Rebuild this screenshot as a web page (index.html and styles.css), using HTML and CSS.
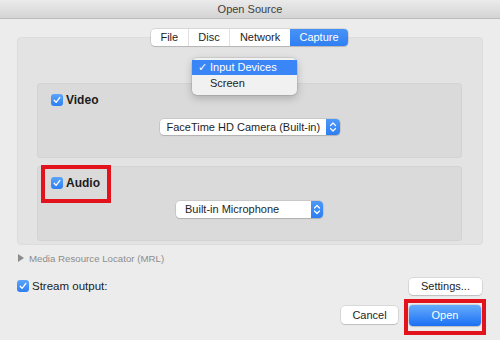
FILE: index.html
```html
<!DOCTYPE html>
<html lang="en">

<head>
  <meta charset="UTF-8">
  <meta name="viewport" content="width=device-width, initial-scale=1.0">
  <title>Open Source</title>
  <link rel="stylesheet" href="styles.css">
</head>

<body>
  <div class="window">
    <div class="titlebar">Open Source</div>
    <div class="content">
      <div class="tabpanel">
        <div class="tabs">
          <span class="tab">File</span>
          <span class="tab">Disc</span>
          <span class="tab">Network</span>
          <span class="tab tab-active">Capture</span>
        </div>

        <!-- capture mode menu, opened -->
        <div class="menu">
          <div class="menu-item menu-item-on"><span class="menu-check">✓</span>Input Devices</div>
          <div class="menu-item">Screen</div>
        </div>

        <div class="group">
          <label class="check-label">
            <span class="checkbox"><svg width="12" height="12" viewBox="0 0 12 12"><path d="M3.2 6.3 L5.1 8.4 L8.9 3.4" fill="none" stroke="#fff" stroke-width="1.3" stroke-linecap="round" stroke-linejoin="round"/></svg></span>
            Video
          </label>
          <div class="popup popup-camera">
            <span class="popup-text">FaceTime HD Camera (Built-in)</span>
            <span class="stepper"><svg width="14" height="16" viewBox="0 0 14 16"><path d="M4.5 6.5 L7 4 L9.5 6.5 M4.5 9.5 L7 12 L9.5 9.5" fill="none" stroke="#fff" stroke-width="1.2" stroke-linecap="round" stroke-linejoin="round"/></svg></span>
          </div>
        </div>

        <div class="group">
          <label class="check-label">
            <span class="checkbox"><svg width="12" height="12" viewBox="0 0 12 12"><path d="M3.2 6.3 L5.1 8.4 L8.9 3.4" fill="none" stroke="#fff" stroke-width="1.3" stroke-linecap="round" stroke-linejoin="round"/></svg></span>
            Audio
          </label>
          <span class="mark mark-audio"></span>
          <div class="popup popup-mic">
            <span class="popup-text">Built-in Microphone</span>
            <span class="stepper"><svg width="12" height="17" viewBox="0 0 12 17"><path d="M3.5 7 L6 4.5 L8.5 7 M3.5 10 L6 12.5 L8.5 10" fill="none" stroke="#fff" stroke-width="1.2" stroke-linecap="round" stroke-linejoin="round"/></svg></span>
          </div>
        </div>
      </div>

      <div class="disclosure"><span class="triangle"></span>Media Resource Locator (MRL)</div>

      <div class="stream-row">
        <label class="stream-label">
          <span class="checkbox"><svg width="12" height="12" viewBox="0 0 12 12"><path d="M3.2 6.3 L5.1 8.4 L8.9 3.4" fill="none" stroke="#fff" stroke-width="1.3" stroke-linecap="round" stroke-linejoin="round"/></svg></span>
          Stream output:
        </label>
        <button class="btn btn-settings">Settings...</button>
      </div>

      <div class="actions">
        <button class="btn btn-cancel">Cancel</button>
        <button class="btn btn-open">Open</button>
      </div>
    </div>
  </div>
</body>

</html>
```

FILE: styles.css
```css
* {
  margin: 0;
  padding: 0;
  box-sizing: border-box;
}

body {
  background: #ececec;
  font-family: "Liberation Sans", Arial, sans-serif;
  font-size: 11px;
  color: #222;
}

.window {
  width: 500px;
  height: 340px;
  display: flex;
  flex-direction: column;
  background: #ececec;
  overflow: hidden;
}

/* 标题栏 */
.titlebar {
  height: 19px;
  line-height: 18px;
  text-align: center;
  color: #3e3e3e;
  background: linear-gradient(#ebebeb, #d4d4d4);
  border-bottom: 1px solid #bcbcbc;
}

.content {
  padding: 0 18px 0 17px;
  display: flex;
  flex-direction: column;
}

/* 选项卡面板 */
.tabpanel {
  position: relative;
  margin-top: 18px;
  width: 466px;
  height: 208px;
  padding: 0 20px 0 19px;
  background: #e3e3e3;
  border: 1px solid #dddddd;
  border-radius: 4px;
  display: flex;
  flex-direction: column;
  gap: 8px;
}

.tabs {
  align-self: center;
  display: flex;
  height: 17px;
  margin-top: -9px;
  margin-bottom: 29px;
  background: #fff;
  border-radius: 4px;
  box-shadow: 0 0 0 0.5px rgba(0, 0, 0, .18), 0 1px 1px rgba(0, 0, 0, .12);
}

.tab {
  line-height: 17px;
  padding: 0 9.6px;
  color: #1e1e1e;
  border-left: 1px solid #e2e2e2;
}

.tab:first-child {
  border-left: none;
}

.tab-active {
  color: #fff;
  background: linear-gradient(#4893f7, #2f7ff3);
  border-left: none;
  border-radius: 0 4px 4px 0;
}

/* 下拉菜单 */
.menu {
  position: absolute;
  left: 174px;
  top: 20px;
  width: 105px;
  height: 37px;
  padding-top: 2px;
  background: #f1f1f1;
  border-radius: 5px;
  box-shadow: 0 0 0 0.5px rgba(0, 0, 0, .15), 0 3px 8px rgba(0, 0, 0, .22);
  z-index: 2;
}

.menu-item {
  height: 15px;
  line-height: 15px;
  padding-left: 18px;
  color: #222;
  position: relative;
}

.menu-item-on {
  background: #3a86f6;
  color: #fff;
}

.menu-check {
  position: absolute;
  left: 6px;
  top: 0;
}

.menu-item + .menu-item {
  margin-top: 1px;
}

/* 分组框 */
.group {
  position: relative;
  height: 75px;
  padding: 9px 13px 0;
  background: #dadada;
  border: 1px solid #d3d3d3;
  border-radius: 3px;
}

.check-label,
.stream-label {
  display: flex;
  align-items: center;
  gap: 3px;
  height: 14px;
}

.check-label {
  font-size: 12px;
  font-weight: bold;
  color: #1c1c1c;
}

.checkbox {
  width: 12px;
  height: 12px;
  border-radius: 3px;
  background: linear-gradient(#5aa4fa, #2f7ff2);
  display: flex;
}

.popup {
  display: flex;
  height: 16px;
  margin: 12px auto 0;
  background: #fff;
  border-radius: 4px;
  box-shadow: 0 0 0 0.5px rgba(0, 0, 0, .16), 0 1px 1px rgba(0, 0, 0, .12);
}

.popup-camera {
  width: 180px;
}

.popup-mic {
  width: 147px;
  height: 17px;
  margin-top: 11px;
}

.popup-text {
  flex: 1;
  line-height: 16px;
  padding-left: 7px;
  color: #1e1e1e;
}

.popup-mic .popup-text {
  padding-left: 9px;
  line-height: 17px;
}

.stepper {
  display: flex;
  background: linear-gradient(#4d98f8, #2d7ef2);
  border-radius: 0 4px 4px 0;
}

/* 红色标注框 */
.mark {
  position: absolute;
  border: 4px solid #e3131e;
}

.mark-audio {
  left: 3px;
  top: -2px;
  width: 70px;
  height: 38px;
}

.disclosure {
  display: flex;
  align-items: center;
  height: 12px;
  margin-top: 7px;
  padding-left: 1px;
  font-size: 9.7px;
  color: #8c8c8c;
}

.triangle {
  width: 0;
  height: 0;
  border-top: 4px solid transparent;
  border-bottom: 4px solid transparent;
  border-left: 6px solid #8c8c8c;
  margin-right: 5px;
}

.stream-row {
  display: flex;
  justify-content: space-between;
  align-items: center;
  height: 18px;
  margin-top: 13px;
}

.stream-label {
  font-size: 11.5px;
  color: #1c1c1c;
}

.btn {
  font-family: "Liberation Sans", Arial, sans-serif;
  font-size: 11px;
  color: #1e1e1e;
  background: #fff;
  border: none;
  border-radius: 4px;
  box-shadow: 0 0 0 0.5px rgba(0, 0, 0, .17), 0 1px 1px rgba(0, 0, 0, .12);
}

.btn-settings {
  width: 73px;
  height: 17px;
}

.actions {
  display: flex;
  justify-content: flex-end;
  align-items: center;
  gap: 11px;
  height: 22px;
  margin-top: 9px;
  padding-right: 1px;
}

.btn-cancel {
  width: 57px;
  height: 18px;
}

.btn-open {
  position: relative;
  width: 72px;
  height: 21px;
  color: #fff;
  background: linear-gradient(#66acfc, #1b70f4);
}

.btn-open::after {
  content: '';
  position: absolute;
  left: -5px;
  right: -5px;
  top: -6px;
  bottom: -9px;
  border: 4px solid #e3131e;
}
```
